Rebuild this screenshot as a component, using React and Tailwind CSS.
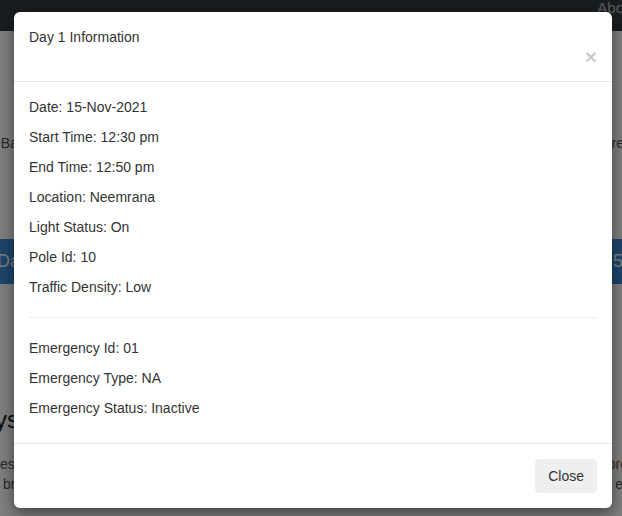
import React from "react";

const DAY_INFO = [
  ["Date", "15-Nov-2021"],
  ["Start Time", "12:30 pm"],
  ["End Time", "12:50 pm"],
  ["Location", "Neemrana"],
  ["Light Status", "On"],
  ["Pole Id", "10"],
  ["Traffic Density", "Low"],
];

const EMERGENCY_INFO = [
  ["Emergency Id", "01"],
  ["Emergency Type", "NA"],
  ["Emergency Status", "Inactive"],
];

function InfoLine({ label, value }) {
  return (
    <p className="mb-[10px] leading-[20px]">
      {label}: {value}
    </p>
  );
}

// page that sits behind the backdrop, only its edges show
function BackgroundPage() {
  return (
    <div className="h-full w-full bg-white text-[#333]">
      <nav className="flex h-[31px] items-start justify-end bg-[#343a40] text-[15px] leading-[15px] text-[#bbb]">
        <span className="-mr-[2px]">Abo</span>
      </nav>
      <div className="mt-[102px] flex justify-between text-[14px] leading-[20px] text-[#555]">
        <span className="-ml-[4px]">-Ba</span>
        <span className="-mr-[2px]">re</span>
      </div>
      <div className="mt-[86px] flex h-[45px] items-center justify-between bg-[#3a8ad6] text-[18px] text-white">
        <span className="-ml-[3px]">Da</span>
        <span className="-mr-[1px]">5</span>
      </div>
      <h2 className="mt-[122px] text-[24px] font-medium leading-[28px] text-[#222]">
        <span className="-ml-[5px]">ys</span>
      </h2>
      <div className="mt-[20px] flex justify-between text-[14px] leading-[20px] text-[#555]">
        <span className="-ml-[4px]">tes</span>
        <span className="-mr-[6px]">pro</span>
      </div>
      <div className="flex justify-between text-[14px] leading-[20px] text-[#555]">
        <span className="ml-[3px]">br</span>
        <span className="-mr-[1px]">, e</span>
      </div>
    </div>
  );
}

export default function App() {
  return (
    <div
      className="relative h-[516px] w-[622px] overflow-hidden"
      style={{ fontFamily: '"Liberation Sans", Arial, sans-serif' }}
    >
      <BackgroundPage />

      {/* Modal backdrop */}
      <div className="absolute inset-0 flex bg-black/50 pt-[12px] pl-[14px]">
        <div className="flex h-[496px] w-[598px] flex-col rounded-[6px] bg-white text-[14px] text-[#333] shadow-[0_5px_15px_rgba(0,0,0,0.5)]">
          <div className="border-b border-[#e5e5e5] p-[15px]">
            <h4 className="text-[14px] leading-[20px]">Day 1 Information</h4>
            <div className="flex justify-end">
              <button className="h-[19px] text-[21px] font-bold leading-[19px] text-black opacity-20">
                ×
              </button>
            </div>
          </div>

          <div className="p-[15px]">
            {DAY_INFO.map(([label, value]) => (
              <InfoLine key={label} label={label} value={value} />
            ))}
            <hr className="mt-[20px] mb-[20px] border-t border-[#eee]" />
            {EMERGENCY_INFO.map(([label, value]) => (
              <InfoLine key={label} label={label} value={value} />
            ))}
          </div>

          <div className="flex justify-end border-t border-[#e5e5e5] p-[15px]">
            <button className="h-[34px] rounded-[4px] border border-[#efefef] bg-[#efefef] px-[12px] text-[14px] leading-[20px] text-[#333]">
              Close
            </button>
          </div>
        </div>
      </div>
    </div>
  );
}
